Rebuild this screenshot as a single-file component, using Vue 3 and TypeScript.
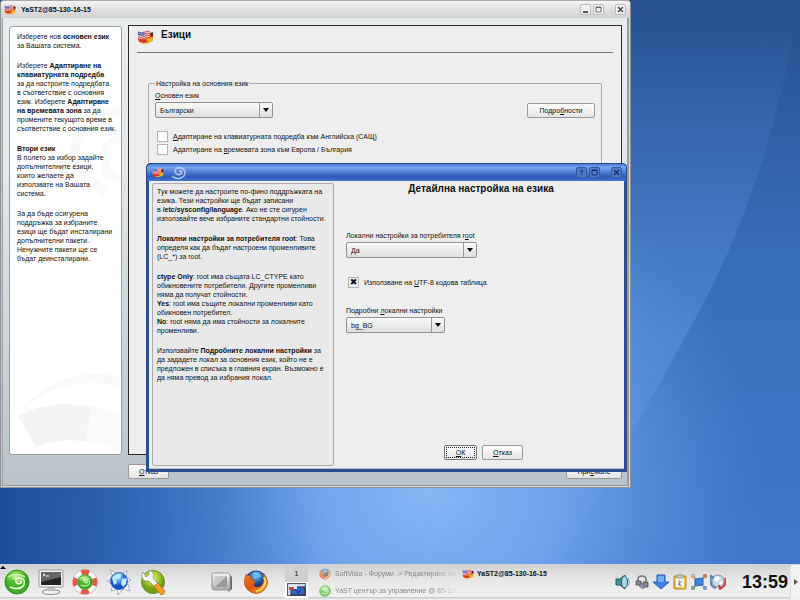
<script setup lang="ts">
import { ref } from 'vue'

interface Run {
  text: string
  bold?: boolean
}
type Line = Run[]

const n = (text: string): Run => ({ text })
const b = (text: string): Run => ({ text, bold: true })

const mainHelp: Line[][] = [
  [[n('Изберете нов '), b('основен език')], [n('за Вашата система.')]],
  [
    [n('Изберете '), b('Адаптиране на')],
    [b('клавиатурната подредба')],
    [n('за да настроите подредбата')],
    [n('в съответствие с основния')],
    [n('език. Изберете '), b('Адаптиране')],
    [b('на времевата зона'), n(' за да')],
    [n('промените текущото време в')],
    [n('съответствие с основния език.')],
  ],
  [
    [b('Втори език')],
    [n('В полето за избор задайте')],
    [n('допълнителните езици,')],
    [n('които желаете да')],
    [n('използвате на Вашата')],
    [n('система.')],
  ],
  [
    [n('За да бъде осигурена')],
    [n('поддръжка за избраните')],
    [n('езици ще бъдат инсталирани')],
    [n('допълнителни пакети.')],
    [n('Ненужните пакети ще се')],
    [n('бъдат деинсталирани.')],
  ],
]

const dialogHelp: Line[][] = [
  [
    [n('Тук можете да настроите по-фино поддръжката на')],
    [n('езика. Тези настройки ще бъдат записани')],
    [n('в '), b('/etc/sysconfig/language'), n('. Ако не сте сигурен')],
    [n('използвайте вече избраните стандартни стойности.')],
  ],
  [
    [b('Локални настройки за потребителя root'), n(': Това')],
    [n('определя как да бъдат настроени променливите')],
    [n('(LC_*) за root.')],
  ],
  [
    [b('ctype Only'), n(': root има същата LC_CTYPE като')],
    [n('обикновените потребители. Другите променливи')],
    [n('няма да получат стойности.')],
    [b('Yes'), n(': root има същите локални променливи като')],
    [n('обикновен потребител.')],
    [b('No'), n(': root няма да има стойности за локалните')],
    [n('променливи.')],
  ],
  [
    [n('Използвайте '), b('Подробните локални настройки'), n(' за')],
    [n('да зададете локал за основния език, който не е')],
    [n('предложен в списъка в главния екран. Възможно е')],
    [n('да няма превод за избрания локал.')],
  ],
]

const language = ref('Български')
const rootLocale = ref('Да')
const detailedLocale = ref('bg_BG')
const adaptKeyboard = ref(false)
const adaptTimezone = ref(false)
const useUtf8 = ref(true)
</script>

<template>
  <div class="screen">
    <svg class="defs" aria-hidden="true">
      <defs>
        <symbol id="flags" viewBox="0 0 18 16">
          <path d="M5 7 L17 5 V12 Q12 16 5 15Z" fill="#e8b520" />
          <path d="M5 7 L17 4 V8 L5 11Z" fill="#d42a1c" />
          <path d="M12 4 L17 3 V6 L12 7Z" fill="#402018" />
          <path d="M1 2 Q5 4 8 2 T14 2 V9 Q11 8 8 10 T1 10Z" fill="#f4e6e4" />
          <path d="M8 3 Q11 1 14 3 M8 5 Q11 3 14 5 M1 8 Q5 9 8 7 T14 7 M1 10 Q5 11 8 9 T14 9" fill="none" stroke="#d8302a" />
          <path d="M1 2 Q5 4 8 2 V6 Q5 8 1 6Z" fill="#5a5fb5" />
          <path d="M2 4h1M4 4h1M6 4h1M3 6h1M5 6h1" stroke="#c8c8f0" />
          <path d="M1 10 Q5 11 9 10 L12 13 Q6 15 2 13Z" fill="#e03424" />
        </symbol>
        <symbol id="gecko" viewBox="0 0 26 26">
          <circle cx="13" cy="13" r="12" fill="url(#green)" stroke="#35941e" />
          <path d="M2 14 Q8 8 14 13 T24 13 Q23 23 13 24 Q4 23 2 14Z" fill="#46b52a" opacity=".75" />
          <path d="M6 18 Q15 22 20 16 Q22 10 16 9 Q11 9 12 13 Q14 16 17 14 Q18 12 16 12" fill="none" stroke="#f2ffe8" stroke-width="1.500" />
          <path d="M4 8 Q12 3 21 8" fill="none" stroke="#d9f7bd" stroke-width="2" opacity=".7" />
        </symbol>
        <symbol id="firefox" viewBox="0 0 26 26">
          <circle cx="13" cy="13" r="11" fill="url(#blue)" stroke="#1c3b85" />
          <path d="M10 4 Q16 2 18 8 Q14 7 12 10 Z" fill="#72c0f0" />
          <path d="M3 5 Q4 7 8 7 Q6 10 10 11 L13 13 Q10 14 11 17 Q15 20 19 16 Q22 11 20 4 Q28 13 22 20 Q16 27 8 23 Q-2 18 3 5Z" fill="url(#fox)" stroke="#c85310" stroke-width=".6" />
          <path d="M21 8 Q24 14 20 18 Q17 22 13 22" fill="none" stroke="#ffd94c" stroke-width="2" />
        </symbol>
        <radialGradient id="green" cx=".45" cy=".3"><stop stop-color="#d8f7a8" /><stop offset=".6" stop-color="#62c435" /><stop offset="1" stop-color="#2fa01e" /></radialGradient>
        <radialGradient id="lime" cx=".45" cy=".3"><stop stop-color="#e6f58a" /><stop offset=".6" stop-color="#a2cc2e" /><stop offset="1" stop-color="#6f9f16" /></radialGradient>
        <radialGradient id="blue" cx=".5" cy=".2"><stop stop-color="#8bd5f7" /><stop offset=".6" stop-color="#2562b4" /><stop offset="1" stop-color="#152c70" /></radialGradient>
        <radialGradient id="globe" cx=".45" cy=".3"><stop stop-color="#bfe4ff" /><stop offset=".5" stop-color="#4a93ee" /><stop offset="1" stop-color="#1648c0" /></radialGradient>
        <linearGradient id="fox" x2="1" y2="1"><stop stop-color="#f07b1c" /><stop offset=".5" stop-color="#e45214" /><stop offset="1" stop-color="#f7b52d" /></linearGradient>
        <linearGradient id="chrome" x2="0" y2="1"><stop stop-color="#f8f8f8" /><stop offset="1" stop-color="#a8a8a8" /></linearGradient>
      </defs>
    </svg>

    <main class="desktop">
      <svg class="wallpaper" viewBox="0 0 800 564" preserveAspectRatio="none" aria-hidden="true">
        <defs>
          <linearGradient id="sky" x1="0" y1="0" x2="0" y2="1"><stop stop-color="#264f8f" /><stop offset=".45" stop-color="#386db8" /><stop offset="1" stop-color="#3f78cb" /></linearGradient>
          <radialGradient id="glow" gradientUnits="userSpaceOnUse" cx="430" cy="480" r="330"><stop stop-color="#8dbdfa" /><stop offset=".4" stop-color="#76aaf0" stop-opacity=".85" /><stop offset="1" stop-color="#5d95e3" stop-opacity="0" /></radialGradient>
          <linearGradient id="beam" x1="0" y1="0" x2="0" y2="1"><stop stop-color="#5f97e2" stop-opacity="0" /><stop offset=".6" stop-color="#6ba1ea" stop-opacity=".35" /><stop offset="1" stop-color="#6ba1ea" stop-opacity=".1" /></linearGradient>
          <linearGradient id="shade" x1="0" y1="0" x2="1" y2="0"><stop stop-color="#164590" stop-opacity=".85" /><stop offset="1" stop-color="#2d67b8" stop-opacity="0" /></linearGradient>
        </defs>
        <rect width="800" height="564" fill="url(#sky)" />
        <rect width="800" height="564" fill="url(#glow)" />
        <path d="M800 0 Q770 180 700 310 Q650 400 560 564 H300 V0Z" fill="url(#beam)" />
        <rect y="470" width="330" height="94" fill="url(#shade)" />
      </svg>

      <section class="window main-window">
        <header class="titlebar">
          <svg class="title-icon"><use href="#flags" /></svg>
          <span class="title-text">YaST2@85-130-16-15</span>
          <button class="title-button" aria-label="Минимизиране"><svg viewBox="0 0 9 9"><path d="M2 7h5" stroke="#555" stroke-width="2" /></svg></button>
          <button class="title-button" aria-label="Максимизиране"><svg viewBox="0 0 9 9"><path d="M2 2h5v5h-5z M2 2.5h5" fill="none" stroke="#666" /></svg></button>
          <button class="title-button close" aria-label="Затваряне"><svg viewBox="0 0 9 9"><path d="M2 2l5 5M7 2l-5 5" stroke="#444" stroke-width="1.4" /></svg></button>
        </header>
        <div class="main-body">
          <aside class="help main-help">
            <svg class="watermark top-mark" viewBox="0 0 80 140" aria-hidden="true"><g fill="none" stroke="#f9f9f9"><path d="M80 20 Q20 40 18 75 T60 130" stroke-width="14" /><path d="M80 58 Q48 66 62 104 L80 112" stroke-width="11" /></g></svg>
            <svg class="watermark low-mark" viewBox="0 0 112 90" aria-hidden="true">
              <path d="M8 52 Q40 8 112 20 L112 11 Q42 -2 8 52Z" fill="#f9f9f9" />
              <path d="M7 51 Q40 33 83 42 L76 77 Q46 73 26 83Z" fill="#f4f4f4" />
              <path d="M83 42 Q98 44 112 52 V88 Q94 79 76 77Z" fill="#fafafa" />
            </svg>
            <div class="help-text">
              <p v-for="(paragraph, p) in mainHelp" :key="p"><span v-for="(line, l) in paragraph" :key="l" class="line"><component :is="run.bold ? 'b' : 'span'" v-for="(run, r) in line" :key="r">{{ run.text }}</component></span></p>
            </div>
          </aside>
          <section class="panel">
            <div class="heading">
              <svg class="heading-icon"><use href="#flags" /></svg>
              <h1>Езици</h1>
            </div>
            <fieldset>
              <legend>Настройка на основния език</legend>
              <div class="language-row">
                <div>
                  <label for="language"><u>О</u>сновен език</label>
                  <div class="combo wide">
                    <select id="language" v-model="language"><option>Български</option></select>
                    <span class="arrow"></span>
                  </div>
                </div>
                <button class="button details">Подро<u>б</u>ности</button>
              </div>
              <label class="check"><input v-model="adaptKeyboard" type="checkbox" /><span><u>А</u>даптиране на клавиатурната подредба към Английска (САЩ)</span></label>
              <label class="check"><input v-model="adaptTimezone" type="checkbox" /><span>Адаптиране на <u>в</u>ремевата зона към Европа / България</span></label>
            </fieldset>
          </section>
        </div>
        <footer class="main-actions">
          <button class="button"><u>О</u>тказ</button>
          <button class="button accept">При<u>е</u>мане</button>
        </footer>
      </section>

      <section class="window dialog" role="dialog" aria-labelledby="dialog-title">
        <header class="titlebar active">
          <svg class="title-icon"><use href="#flags" /></svg>
          <svg class="suse-icon" viewBox="0 0 16 16" aria-hidden="true"><path d="M1 11 Q7 16 13 11 Q16 5 10 3 Q4 2 4 7 Q6 11 10 9 Q12 6 8 6" fill="none" stroke="#b5cdf0" stroke-width="1.5" /></svg>
          <span class="title-text"></span>
          <button class="title-button" aria-label="Помощ">?</button>
          <button class="title-button" aria-label="Максимизиране"><svg viewBox="0 0 9 9"><path d="M2 2h5v5h-5z M2 2.5h5" fill="none" stroke="#122c6c" /></svg></button>
          <button class="title-button close" aria-label="Затваряне"><svg viewBox="0 0 9 9"><path d="M2 2l5 5M7 2l-5 5" stroke="#122c6c" stroke-width="1.4" /></svg></button>
        </header>
        <div class="dialog-body">
          <aside class="help dialog-help">
            <p v-for="(paragraph, p) in dialogHelp" :key="p"><span v-for="(line, l) in paragraph" :key="l" class="line"><component :is="run.bold ? 'b' : 'span'" v-for="(run, r) in line" :key="r">{{ run.text }}</component></span></p>
          </aside>
          <div class="dialog-form">
            <h2 id="dialog-title">Детайлна настройка на езика</h2>
            <div class="fields">
              <label for="root-locale">Локални настройки за потребителя r<u>o</u>ot</label>
              <div class="combo root">
                <select id="root-locale" v-model="rootLocale"><option>Да</option></select>
                <span class="arrow"></span>
              </div>
              <label class="check utf"><input v-model="useUtf8" type="checkbox" /><span>Използване на <u>U</u>TF-8 кодова таблица</span></label>
              <label for="detailed-locale">Подробни <u>л</u>окални настройки</label>
              <div class="combo detail">
                <select id="detailed-locale" v-model="detailedLocale"><option>bg_BG</option></select>
                <span class="arrow"></span>
              </div>
            </div>
            <div class="dialog-actions">
              <button class="button ok"><span><u>О</u>К</span></button>
              <button class="button"><u>О</u>тказ</button>
            </div>
          </div>
        </div>
      </section>
    </main>

    <footer class="taskbar">
      <span class="corner"></span>
      <nav class="launchers">
        <button aria-label="Меню"><svg viewBox="0 0 26 26"><use href="#gecko" /></svg></button>
        <button aria-label="Терминал">
          <svg viewBox="0 0 26 26"><ellipse cx="13" cy="23" rx="9" ry="2.5" fill="#eee" stroke="#888" /><path d="M10 17h6l1 5H9z" fill="#bbb" /><rect x="1" y="1" width="24" height="17" rx="1" fill="#f4f4f4" stroke="#999" /><rect x="3" y="3" width="20" height="13" fill="#222" /><path d="M3 3h20v5L3 13z" fill="#666" /><path d="M5 5l2 1-2 1M8 7h3" fill="none" stroke="#fff" /></svg>
        </button>
        <button aria-label="Помощ">
          <svg viewBox="0 0 26 26"><circle cx="13" cy="13" r="10" fill="none" stroke="#fafafa" stroke-width="5" /><circle cx="13" cy="13" r="10" fill="none" stroke="#ed5545" stroke-width="5" stroke-dasharray="7.85 7.85" stroke-dashoffset="4" /><circle cx="13" cy="13" r="12.4" fill="none" stroke="#c99" stroke-width=".6" /><use href="#gecko" x="5" y="5" width="16" height="16" /></svg>
        </button>
        <button aria-label="Мрежа">
          <svg viewBox="0 0 26 26"><g fill="#f6f9ff" stroke="#8296be" stroke-width=".7"><path d="M4 1l6 3-3 4zM1 12l6-2v6zM5 22l2-6 5 4zM12 26l-1-6h6zM24 22l-7-2 5-5zM25 11l-6-3 0 7zM21 2l-1 7-5-4z" /></g><circle cx="13" cy="12" r="8.5" fill="url(#globe)" stroke="#2457bd" stroke-width=".7" /><path d="M6 9q4-6 10-4l-2 4-4 1 1 4-3 2zM16 10l5-1-1 6-3 3-2-3z" fill="#c4e6ff" /></svg>
        </button>
        <button aria-label="Център за управление">
          <svg viewBox="0 0 26 26"><circle cx="13" cy="13" r="11.5" fill="url(#lime)" stroke="#65921b" /><path d="M3 3 Q0 8 5 12 L9 12 16 19 19 16 13 9 Q15 3 9 1 L9 6 6 8Z" fill="#f6f6f6" stroke="#888" stroke-width=".7" /><path d="M14 17l4-3 7 8q-1 4-4 4z" fill="#f59c22" stroke="#c26b0b" stroke-width=".7" /></svg>
        </button>
        <button class="screen-button" aria-label="Работен плот">
          <svg viewBox="0 0 26 26"><path d="M20 5l3 3v12l-4 3z" fill="#666" /><rect x="3" y="4" width="18" height="17" rx="2" fill="url(#chrome)" stroke="#999" /><path d="M6 7h12L6 18z" fill="#c9c9c9" /><path d="M18 7v11H6z" fill="#9a9a9a" /></svg>
        </button>
        <button aria-label="Firefox"><svg viewBox="0 0 26 26"><use href="#firefox" /></svg></button>
      </nav>
      <div class="pager">
        <button>1</button>
        <button class="current" aria-label="2"><svg viewBox="0 0 19 13"><rect x=".5" y=".5" width="18" height="12" fill="#c9d6ec" stroke="#555" /><rect x="4" y="4" width="14" height="8" fill="#3563bd" stroke="#234" /><path d="M2 2h8v4H2z" fill="#e8e8f2" /><path d="M2 4h5v3H2z" fill="#d33d35" /><path d="M8 6l3 4 3-3" stroke="#122f69" fill="none" /></svg></button>
      </div>
      <div class="tasks">
        <button><svg viewBox="0 0 26 26"><use href="#firefox" /></svg><span>SoftVisia - Форуми -&gt; Редактиране на</span></button>
        <button class="selected"><svg viewBox="0 0 18 16"><use href="#flags" /></svg><span>YaST2@85-130-16-15</span></button>
        <button><svg viewBox="0 0 26 26"><use href="#gecko" /></svg><span>YaST център за управление @ 85-130</span></button>
      </div>
      <div class="tray">
        <svg viewBox="0 0 16 16"><path d="M1 5h4l5-4v14l-5-4H1z" fill="#42969e" stroke="#265866" /><ellipse cx="9.5" cy="8" rx="3" ry="6" fill="#a8dce2" stroke="#265866" /><path d="M13 4q3 4 0 8" fill="none" stroke="#80a8b0" /></svg>
        <svg viewBox="0 0 16 16"><path d="M4 7V5q0-3 4-3t4 3v3" fill="none" stroke="#777" stroke-width="1.6" /><path d="M2 7h5v4H2zM9 8h5v5H9z" fill="#888" stroke="#444" stroke-width=".7" /><path d="M5 12l3-3 3 4-2 2z" fill="#9b8cc0" stroke="#666" stroke-width=".7" /></svg>
        <svg viewBox="0 0 16 16"><path d="M4 1h8v7h4l-8 7-8-7h4z" fill="#3e80e8" stroke="#285bb4" /><path d="M5 2h6v6H5z" fill="#79adf6" /></svg>
        <svg viewBox="0 0 16 16"><rect x="2" y="2" width="12" height="13" rx="1" fill="#e9bd54" stroke="#b68425" /><path d="M4 4h8v9H4z" fill="#fafafa" /><path d="M5 1h6v3H5z" fill="#ccb" stroke="#998" /><path d="M7 6v6M10 7l-3 3 3 2" fill="none" stroke="#777" /></svg>
        <svg viewBox="0 0 16 16"><path d="M3 3l10 10M13 3L3 13" stroke="#777" /><path d="M4 5l8-1v7l-8 1z" fill="#4082de" stroke="#2a61b8" /><g stroke-width=".5" stroke="#666"><circle cx="2" cy="2" r="1.8" fill="#e7c29a" /><circle cx="14" cy="2" r="1.8" fill="#ed6b42" /><circle cx="2" cy="14" r="1.8" fill="#60bd79" /><circle cx="14" cy="14" r="1.8" fill="#6aa9e8" /></g></svg>
        <svg viewBox="0 0 16 16"><circle cx="8" cy="7" r="6" fill="#cbd9e7" stroke="#7c8fa5" /><path d="M4 4l4-2 2 3-4 3zM9 8l4-1-2 5z" fill="#f8f8f8" /><path d="M1 4q-2 8 5 10M0 5l1-3 3 2" stroke="#5c82ad" stroke-width="2" fill="none" /><path d="M15 4q2 7-4 10M15 11l-5 4-1-4" stroke="#d13b3b" stroke-width="2" fill="none" /></svg>
      </div>
      <time class="clock">13:59</time>
      <button class="hide" aria-label="Скриване"><span></span></button>
    </footer>
  </div>
</template>

<style>
body { margin: 0; }
</style>

<style scoped>
* { box-sizing: border-box; }
.screen {
  display: flex;
  flex-direction: column;
  min-height: 100vh;
  font: 7px/9px "Liberation Sans", Arial, sans-serif;
  color: #111;
}
.defs { position: absolute; width: 0; height: 0; }
.desktop { position: relative; flex: 1; min-height: 480px; overflow: hidden; background: #3a6fb9; }
.wallpaper { position: absolute; inset: 0; width: 100%; height: 100%; }
button, select, input { margin: 0; font: inherit; color: inherit; }
button { padding: 0; }
p, h1, h2 { margin: 0; }

.window { position: absolute; display: flex; flex-direction: column; }
.main-window {
  inset: 0 169px 76px 0;
  border: 1px solid #8f9396;
  border-top-color: #aaa;
  border-radius: 4px 4px 0 0;
  background: linear-gradient(#e8eced, #e3e8ea 35%, #b8c3cb);
  box-shadow: inset 1px 0 #c5c8cb, inset -1px -1px #d5d7d9, inset 2px 0 #9ca2a7, inset -3px -2px #959ca2;
}
.titlebar {
  display: flex;
  align-items: center;
  flex: none;
  height: 17px;
  padding: 0 4px 0 3px;
  border-radius: 3px 3px 0 0;
  background: linear-gradient(#f4f4f4, #dcdcdc 60%, #d2d2d2);
}
.title-icon { width: 12px; height: 11px; }
.title-text { flex: 1; padding-left: 5px; font-weight: bold; }
.title-button {
  display: grid;
  place-items: center;
  width: 11px;
  height: 11px;
  margin-left: 2px;
  border: 1px solid #bcbcbc;
  border-radius: 2px;
  background: #f1f1f1;
  font-weight: bold;
}
.title-button svg { width: 9px; height: 9px; }
.title-button.close { margin-left: 11px; }

.main-body { display: flex; flex: 1; gap: 6px; min-height: 0; padding: 7px 8px 0; }
.help .line { display: block; white-space: nowrap; }
.help p + p { margin-top: 11px; }
.main-help {
  position: relative;
  flex: none;
  width: 113px;
  margin-top: 1px;
  border: 1px solid #9a9ea1;
  border-radius: 3px;
  background: #fff;
}
.watermark { position: absolute; right: 0; }
.top-mark { top: 60px; width: 60px; height: 120px; }
.low-mark { bottom: 0; width: 100%; height: 88px; }
.help-text { position: relative; padding: 5px 0 0 7px; }
.panel { flex: 1; min-width: 0; border: 1px solid #2b2b2b; background: #eee; }
.heading {
  display: flex;
  align-items: flex-start;
  gap: 7px;
  height: 27px;
  margin: 0 8px;
  padding-top: 3px;
  border-bottom: 1px solid #777;
}
.heading-icon { width: 17px; height: 16px; }
h1 { font-size: 10px; line-height: 12px; }
fieldset {
  min-width: 0;
  height: 300px;
  margin: 26px 19px 0;
  padding: 3px 6px 0;
  border: 1px solid #aaa;
  border-radius: 2px;
}
legend { margin: 0; padding: 0 1px; }
.language-row { display: flex; justify-content: space-between; align-items: flex-end; margin-bottom: 12px; }
label { display: block; }
.combo { position: relative; height: 16px; margin-top: 2px; }
.combo select {
  appearance: none;
  width: 100%;
  height: 100%;
  padding: 0 16px 0 4px;
  border: 1px solid #929292;
  border-radius: 2px;
  background: linear-gradient(#fafafa, #dedede);
}
.arrow {
  position: absolute;
  top: 1px;
  right: 1px;
  bottom: 1px;
  display: grid;
  place-items: center;
  width: 13px;
  border-left: 1px solid #999;
  pointer-events: none;
}
.arrow::before { content: ""; border: 3px solid transparent; border-top: 4px solid #000; border-bottom: 0; }
.wide { width: 118px; }
.root { width: 131px; }
.detail { width: 99px; }
.button {
  height: 15px;
  min-width: 41px;
  border: 1px solid #999;
  border-radius: 2px;
  background: linear-gradient(#fff, #e4e4e4);
}
.details { width: 68px; }
.check { display: flex; align-items: center; gap: 5px; height: 13px; padding-left: 2px; }
.check input {
  appearance: none;
  display: grid;
  place-items: center;
  width: 11px;
  height: 11px;
  border: 1px solid #b4b4b4;
  background: #fff;
}
.check input:checked { background: #eee; }
.check input:checked::before { content: "✖"; font: bold 9px/9px "DejaVu Sans", sans-serif; }
.main-actions { display: flex; justify-content: space-between; padding: 9px 8px 8px 127px; }
.accept { width: 56px; }

.dialog {
  inset: 163px 173px 92px 146px;
  border: 3px solid #2c4e8e;
  border-width: 0 3px 3px;
  border-radius: 5px 5px 0 0;
  background: #eee;
  box-shadow: inset 0 -1px #b7c0d0;
}
.titlebar.active {
  height: 18px;
  margin: 0 -3px;
  padding: 0 4px 0 5px;
  border: 1px solid #24498c;
  border-bottom: 0;
  border-radius: 5px 5px 0 0;
  background: linear-gradient(#4a7ad0, #7aa5ee 20%, #4473cc 55%, #3059b6 75%, #4476d2);
}
.suse-icon { width: 16px; height: 16px; margin-left: 7px; }
.active .title-button { border-color: #3159a6; background: #5279c4; color: #122c6c; }
.dialog-body { display: flex; flex: 1; min-height: 0; }
.dialog-help {
  flex: none;
  width: 182px;
  margin: 2px 0 3px 3px;
  padding: 3px 0 0 4px;
  border: 1px solid #b1a9b1;
  border-radius: 2px;
  background: #e9e9e9;
}
.dialog-form { display: flex; flex: 1; flex-direction: column; min-width: 0; padding: 2px 0 9px 12px; }
h2 { padding-right: 8px; font-size: 10px; line-height: 12px; text-align: center; }
.fields { flex: 1; padding-top: 36px; }
.utf { margin: 18px 0 17px; }
.dialog-actions { display: flex; justify-content: center; gap: 5px; padding-right: 3px; }
.ok { min-width: 33px; padding: 1px; border-color: #777; }
.ok span { display: block; border: 1px dotted #222; line-height: 9px; }

.taskbar {
  display: flex;
  align-items: center;
  position: relative;
  height: 36px;
  background: linear-gradient(#d0d0d0, #e7e7e7 45%, #f1f1f1 92%, #ccc 93%, #f5f5f5);
}
.taskbar button { border: 0; background: none; }
.corner { position: absolute; top: 2px; left: 0; border: 3px solid transparent; border-top: 0; border-bottom: 3px solid #000; }
.launchers { display: flex; gap: 8px; padding-left: 4px; }
.launchers button, .launchers button > svg { display: block; width: 26px; height: 26px; }
.launchers .screen-button { margin-left: 35px; }
.pager { display: flex; flex-direction: column; align-self: stretch; width: 23px; margin-left: 16px; padding: 1px 0 2px; }
.taskbar .pager button { flex: 1; background: #d0d0d0; }
.taskbar .pager .current { display: grid; place-items: center; background: #fff; }
.pager svg { width: 19px; height: 13px; }
.tasks { display: grid; flex: 1; grid-template-columns: 143px 1fr; grid-auto-rows: 17px; min-width: 0; padding-left: 11px; }
.tasks button { display: flex; align-items: center; gap: 4px; min-width: 0; color: #888; text-align: left; }
.tasks svg { flex: none; width: 12px; height: 12px; opacity: .6; }
.tasks span { flex: 1; white-space: nowrap; mask-image: linear-gradient(90deg, #000 75%, transparent 98%); }
.tasks .selected { gap: 3px; color: #111; font-weight: bold; }
.tasks .selected svg { opacity: 1; }
.tasks .selected span { mask-image: none; }
.tray { display: flex; gap: 3px; }
.tray svg { width: 16px; height: 16px; }
.clock { width: 47px; margin-left: 16px; font: bold 18px/26px "Liberation Sans", Arial, sans-serif; }
.taskbar .hide { display: grid; place-items: center; width: 10px; height: 34px; margin-left: 1px; border-left: 1px solid #ddd; background: #f3f3f3; }
.hide span { border: 3px solid transparent; border-right: 0; border-left: 4px solid #555; }
</style>
